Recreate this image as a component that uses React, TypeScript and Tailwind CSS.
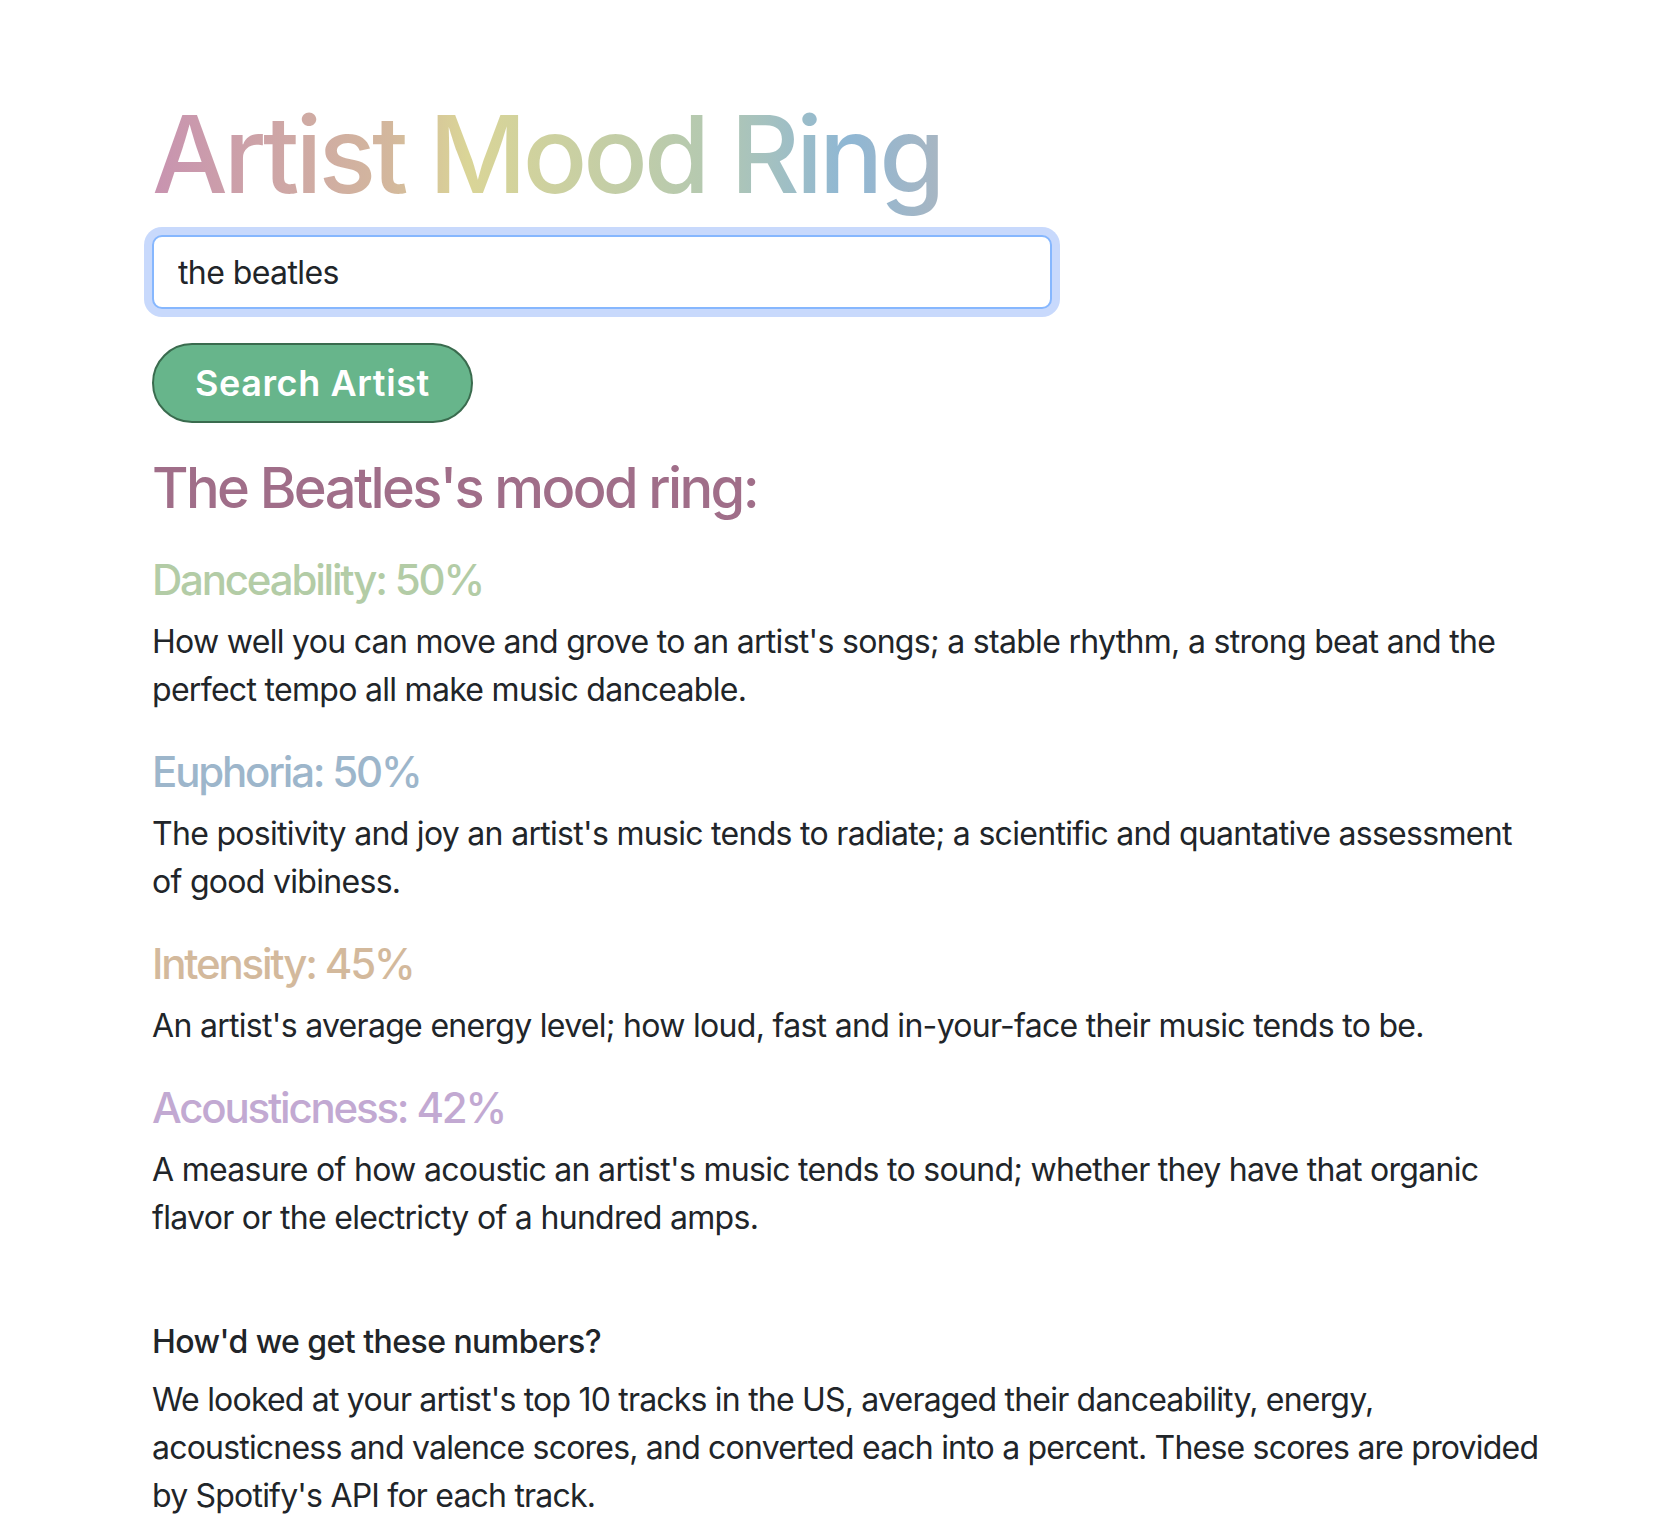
import { useState } from "react";

type Mood = {
    label: string;
    value: number;
    color: string;
    text: string;
}

const moods: Mood[] = [
    {
        label: "Danceability",
        value: 50,
        color: "text-[#b3cca6]",
        text: "How well you can move and grove to an artist's songs; a stable rhythm, a strong beat and the perfect tempo all make music danceable.",
    },
    {
        label: "Euphoria",
        value: 50,
        color: "text-[#9db6cb]",
        text: "The positivity and joy an artist's music tends to radiate; a scientific and quantative assessment of good vibiness.",
    },
    {
        label: "Intensity",
        value: 45,
        color: "text-[#d3b99c]",
        text: "An artist's average energy level; how loud, fast and in-your-face their music tends to be.",
    },
    {
        label: "Acousticness",
        value: 42,
        color: "text-[#c2a9d2]",
        text: "A measure of how acoustic an artist's music tends to sound; whether they have that organic flavor or the electricty of a hundred amps.",
    },
];

function MoodRow({ label, value, color, text }: Mood) {
    return (
        <div>
            <h4 className={`text-[42px] leading-[53px] font-medium tracking-[-2.2px] mb-[12px] ${color}`}>{label}: {value}%</h4>
            <p className="text-[32px] leading-[48px] tracking-[-0.7px] mb-[31px]">{text}</p>
        </div>
    );
}

function App() {
    const [artist, setArtist] = useState<string>("the beatles");

    return (
        <div className="min-h-[1540px] bg-white text-[#212529] font-['Inter','Noto_Sans',sans-serif]">
            <div className="w-[1544px] pl-[152px] pt-[90px] pb-[20px]">
                <h1 className="inline-block text-[107px] leading-[1.2] font-medium tracking-[-4px] bg-clip-text text-transparent [background-image:linear-gradient(to_right,#c893b0_0%,#d3b79d_30%,#dad597_40%,#b5c9b0_70%,#8fb7d4_88%,#a8b6c2_100%)]">
                    Artist Mood Ring
                </h1>
                <div className="mt-[17px]">
                    <input
                        value={artist}
                        onChange={e => setArtist(e.target.value)}
                        className="block w-[900px] h-[74px] px-[24px] text-[32px] leading-[48px] tracking-[-0.6px] text-[#212529] bg-white border-2 border-[#86b7fe] rounded-[10px] outline-none shadow-[0_0_0_8px_#c8d9fc]"
                    />
                </div>
                <button className="mt-[34px] h-[80px] px-[41px] rounded-full border-2 border-[#3a6b4e] bg-[#67b58b] text-white text-[36px] font-semibold tracking-[0.6px] leading-none">
                    Search Artist
                </button>
                <h2 className="mt-[30px] mb-[30px] text-[56px] leading-[70px] font-medium tracking-[-2.6px] text-[#a06e89]">The Beatles's mood ring:</h2>
                {moods.map(m => <MoodRow key={m.label} {...m} />)}
                <h6 className="mt-[81px] mb-[14px] text-[32px] leading-[1.2] font-medium tracking-[-0.55px]">How'd we get these numbers?</h6>
                <p className="text-[32px] leading-[48px] tracking-[-0.8px]">
                    We looked at your artist's top 10 tracks in the US, averaged their danceability, energy, acousticness and valence scores, and converted each into a percent. These scores are provided by Spotify's API for each track.
                </p>
            </div>
        </div>
    );
}

export default App
